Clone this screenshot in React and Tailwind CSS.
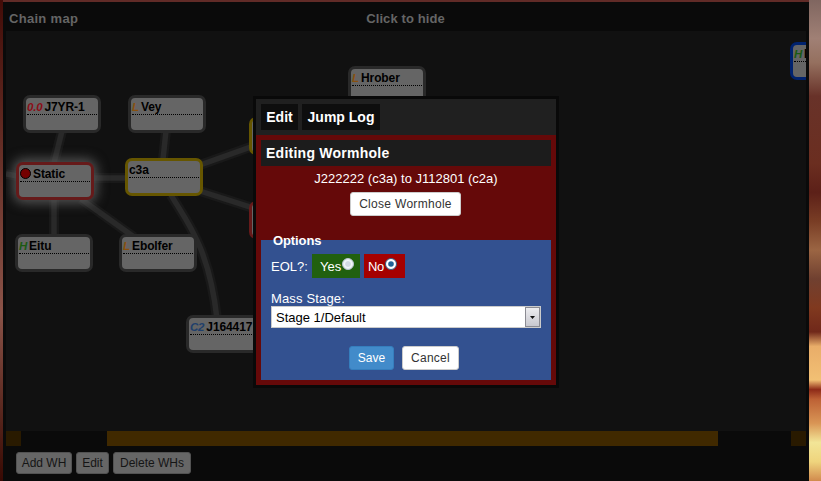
const NODES = [
  { name: 'J7YR-1', tag: '0.0', tagColor: 'text-[#8b0d17]', border: 'border-[#292929]', place: 'left-[17px] top-[64px]' },
  { name: 'Vey', tag: 'L', tagColor: 'text-[#88500d]', border: 'border-[#292929]', place: 'left-[122px] top-[64px]' },
  { name: 'Hrober', tag: 'L', tagColor: 'text-[#88500d]', border: 'border-[#292929]', place: 'left-[342px] top-[35px]' },
  { name: 'Static', dot: true, border: 'border-[#661a1a]', place: 'left-[10px] top-[131px] shadow-[0_0_12px_3px_#555]' },
  { name: 'c3a', border: 'border-[#665600]', place: 'left-[119px] top-[127px]' },
  { name: 'Eitu', tag: 'H', tagColor: 'text-[#1b5a13]', border: 'border-[#292929]', place: 'left-[9px] top-[203px]' },
  { name: 'Ebolfer', tag: 'L', tagColor: 'text-[#88500d]', border: 'border-[#292929]', place: 'left-[113px] top-[203px]' },
  { name: 'J164417', tag: 'C2', tagColor: 'text-[#203f6b]', border: 'border-[#292929]', place: 'left-[180px] top-[284px]' },
  { name: 'I', tag: 'H', tagColor: 'text-[#1b5a13]', border: 'border-[#00226e]', place: 'left-[784px] top-[11px]' },
  { name: '', border: 'border-[#665600]', place: 'left-[243px] top-[86px]' },
  { name: '', border: 'border-[#661a1a]', place: 'left-[243px] top-[170px]' },
]

const LINKS = [
  'M56 100 L48 132',
  'M160 100 L157 128',
  'M0 143 L12 145',
  'M85 147 L122 147',
  'M194 134 L250 114',
  'M194 160 L250 178',
  'M48 168 L48 205',
  'M75 168 L128 206',
  'M165 164 C180 190 203 215 211 288',
]

function Node({ node }) {
  return (
    <div className={`absolute h-[38px] w-[78px] rounded-[7px] border-[3px] bg-[#656565] ${node.border} ${node.place}`}>
      <div className="mx-px flex h-[17px] items-center border-b border-dotted border-black pt-[2px] text-[12px] font-bold leading-[14px] whitespace-nowrap text-black">
        {node.dot && <span className="mr-[2px] mb-[2px] size-[11px] shrink-0 rounded-full border border-black bg-[#740000]" />}
        {node.tag && <span className={`mr-[2px] min-w-[7px] text-[11.5px] tracking-[-0.2px] italic ${node.tagColor}`}>{node.tag}</span>}
        <span className="tracking-[-0.1px]">{node.name}</span>
      </div>
    </div>
  )
}

function Toolbar() {
  return (
    <div className="flex h-[35px] items-start gap-1 pt-[6px] pl-[10px] text-[12px] leading-[20px] text-[#151515]">
      <button className="h-[22px] w-[56px] rounded-[3px] border border-[#525252] bg-[#666]">Add WH</button>
      <button className="h-[22px] w-[33px] rounded-[3px] border border-[#525252] bg-[#666]">Edit</button>
      <button className="h-[22px] w-[78px] rounded-[3px] border border-[#525252] bg-[#666]">Delete WHs</button>
    </div>
  )
}

function Dialog() {
  return (
    <div className="absolute top-[96px] left-[253px] h-[292px] w-[306px] border-[3px] border-[#090909] bg-[#650909] text-white">
      <div className="flex h-[36px] gap-1 bg-[#202020] px-[5px] pt-[5px] text-[14px] leading-[26px] font-bold whitespace-nowrap">
        <div className="h-[26px] w-[37px] bg-[#0e0e0e] text-center">Edit</div>
        <div className="h-[26px] w-[78px] bg-[#0e0e0e] text-center">Jump Log</div>
      </div>
      <div className="px-[5px] pt-[5px]">
        <div className="h-[26px] bg-[#1c1c1c] pl-[5px] text-[14px] leading-[26px] font-bold tracking-[0.25px]">Editing Wormhole</div>
        <div className="mt-[3px] h-[20px] text-center text-[13px] leading-[20px]">J222222 (c3a) to J112801 (c2a)</div>
        <div className="mt-[3px] flex justify-center pr-px">
          <button className="h-[24px] w-[111px] rounded-[3px] border border-[#ccc] bg-white text-[12px] leading-[22px] tracking-[0.3px] text-[#333]">Close Wormhole</button>
        </div>
        <div className="mt-[24px] h-[140px] bg-[#335190] px-[10px]">
          <div className="relative -top-[9px] h-[18px] pl-[2px] text-[13px] leading-[20px] font-bold tracking-[-0.1px]">Options</div>
          <div className="-mt-[4px] flex h-[24px] text-[13px] leading-[25px]">
            <span className="w-[41px]">EOL?:</span>
            <span className="flex w-[48px] bg-[#21600f] pl-[8px]">
              Yes
              <Radio />
            </span>
            <span className="ml-[4px] flex w-[41px] bg-[#a50000] pl-[4px] tracking-[-0.3px]">
              No
              <Radio checked />
            </span>
          </div>
          <div className="mt-[12px] h-[16px] text-[13px] leading-[18px] tracking-[0.15px]">Mass Stage:</div>
          <div className="flex h-[22px] w-[270px] border border-[#cbcbcb] bg-white text-[13px] leading-[21px] text-black">
            <span className="flex-1 pl-[4px]">Stage 1/Default</span>
            <span className="flex h-[20px] w-[15px] items-center justify-center border border-[#8b8b92] bg-linear-to-b from-[#ededf0] to-[#c8c8cf]">
              <svg width="5" height="3" viewBox="0 0 5 3"><path d="M0 0H5L2.5 3Z" fill="#111" /></svg>
            </span>
          </div>
          <div className="mt-[18px] flex gap-[8px] pl-[78px] text-[12px] leading-[22px]">
            <button className="h-[24px] w-[45px] rounded-[3px] border border-[#357ebd] bg-[#428bca]">Save</button>
            <button className="h-[24px] w-[57px] rounded-[3px] border border-[#ccc] bg-white tracking-[0.25px] text-[#333]">Cancel</button>
          </div>
        </div>
      </div>
    </div>
  )
}

function Radio({ checked }) {
  return (
    <svg className="mt-[4px] ml-px size-[12px] shrink-0" viewBox="0 0 12 12">
      <circle cx="6" cy="6" r="5.5" fill={checked ? '#fff' : '#e9edf5'} stroke={checked ? '#315f84' : '#b9c4d2'} />
      {checked ? <circle cx="6" cy="6" r="2.8" fill="#1f6295" /> : <circle cx="6" cy="6" r="3.5" fill="#d3dae6" stroke="#f8faff" />}
    </svg>
  )
}

export default function App() {
  return (
    <div className="relative flex h-[481px] w-[821px] overflow-hidden bg-[#612b27] font-['Liberation_Sans',Arial,sans-serif]">
      <div className="h-full w-[3px] shrink-0 bg-linear-to-b from-[#430c08] via-[#8b5348] via-65% to-[#380904]" />
      <div className="mt-[2px] h-[479px] w-[806px] bg-[#0a0a0a] px-[3px]">
        <div className="grid h-[29px] grid-cols-[1fr_auto_1fr] items-center px-[3px] pt-[4px] text-[13px] font-bold text-[#656565]">
          <span className="tracking-[0.3px]">Chain map</span>
          <span className="pr-px tracking-[0.1px]">Click to hide</span>
        </div>
        <div className="relative h-[400px] overflow-hidden bg-[#111]">
          <svg className="absolute inset-0" width="800" height="400" fill="none">
            {LINKS.map((d) => <path key={d} d={d} stroke="#191919" strokeWidth="10" />)}
            {LINKS.map((d) => <path key={d} d={d} stroke="#292929" strokeWidth="5.5" />)}
          </svg>
          {NODES.map((node) => <Node key={node.place} node={node} />)}
        </div>
        <div className="flex h-[15px]">
          <div className="w-[15px] bg-[#291a00]" />
          <div className="ml-[86px] w-[611px] bg-[#402900]" />
          <div className="ml-auto w-[15px] bg-[#291a00]" />
        </div>
        <Toolbar />
      </div>
      <div className="h-full w-[12px] bg-[linear-gradient(180deg,#806660_0%,#a08075_8%,#95705f_13%,#683229_20%,#6b2e20_34%,#5c2018_40%,#793d25_46%,#9b6543_52%,#704030_58%,#80391f_64%,#70281a_69%,#e9ad69_72%,#f2c074_79%,#8e2a18_81%,#bd6135_83%,#d99555_88%,#f2e597_92%,#efd47d_96%,#d18a4d_100%)]" />
      <Dialog />
    </div>
  )
}
